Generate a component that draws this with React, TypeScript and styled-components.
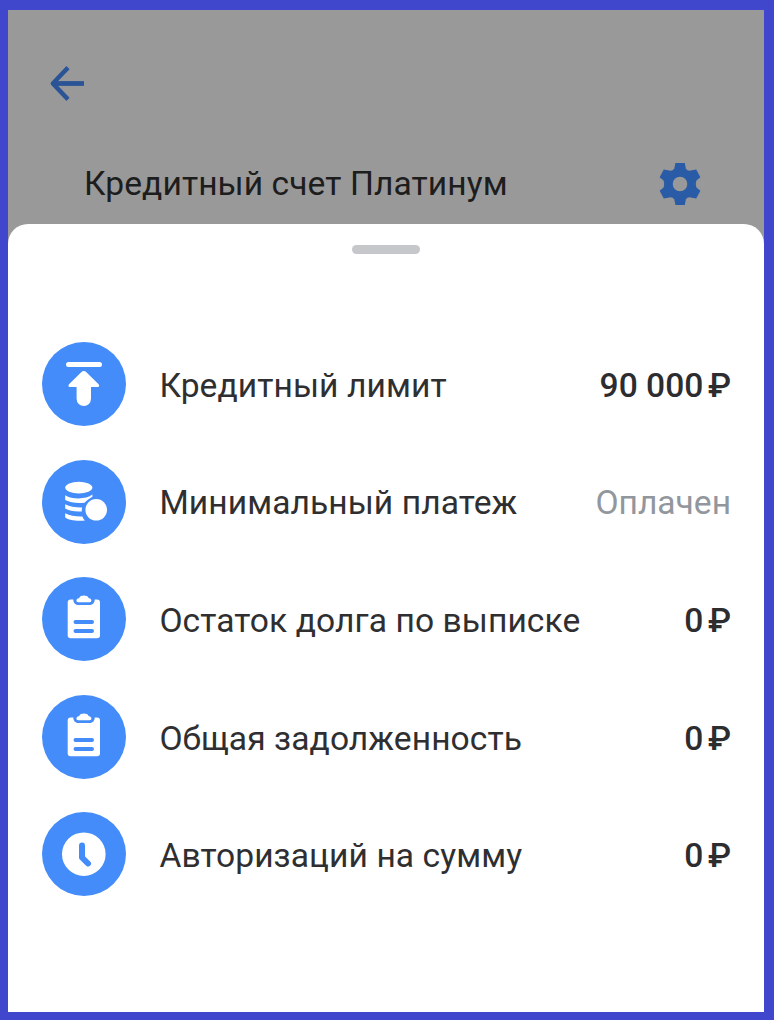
import React from 'react';
import styled, { createGlobalStyle } from 'styled-components';

const GlobalStyle = createGlobalStyle`
  *, *::before, *::after { box-sizing: border-box; }
  html, body { margin: 0; padding: 0; }
  body { font-family: Roboto, "Liberation Sans", sans-serif; }
  svg { display: block; flex: none; }
`;

const Screen = styled.main`
  width: 774px;
  height: 1020px;
  display: flex;
  flex-direction: column;
  overflow: hidden;
  background: #999999;
  border: solid #4047cc;
  border-width: 10px 10px 8px 8px;
`;

const Header = styled.header`
  flex: none;
  height: 214px;
  padding: 53px 59px 0 38px;
`;

const IconButton = styled.button`
  display: block;
  padding: 0;
  border: 0;
  background: none;
`;

const AccountLine = styled.div`
  display: flex;
  align-items: center;
  justify-content: space-between;
  padding-left: 38px;
  margin-top: 54px;
  height: 50px;
`;

const Title = styled.h1`
  margin: 0;
  font-size: 33.6px;
  line-height: 50px;
  font-weight: 400;
  letter-spacing: 0.08px;
  color: #1d1d1d;
  white-space: nowrap;
`;

const Sheet = styled.section`
  flex: 1;
  background: #ffffff;
  border-radius: 20px 20px 0 0;
  padding: 21px 33px 0 34px;
`;

const Handle = styled.div`
  width: 68px;
  height: 9px;
  margin: 0 0 0 310px;
  border-radius: 5px;
  background: #c5c7cb;
`;

const List = styled.ul`
  list-style: none;
  margin: 88px 0 0;
  padding: 0;
  display: flex;
  flex-direction: column;
  gap: 33.6px;
`;

const Row = styled.li`
  display: flex;
  align-items: center;
  height: 84px;
`;

const Label = styled.span`
  flex: 1;
  margin-left: 33.4px;
  padding-top: 3.8px;
  font-size: 33.6px;
  line-height: 40px;
  letter-spacing: 0.08px;
  color: #2f2f31;
  white-space: nowrap;
`;

const Value = styled.span<{ $muted?: boolean }>`
  padding-top: 3.8px;
  font-size: 33.6px;
  line-height: 40px;
  font-weight: ${(p) => (p.$muted ? 400 : 500)};
  letter-spacing: 0;
  color: ${(p) => (p.$muted ? '#92969d' : '#2d2d2f')};
  white-space: nowrap;
`;

const Currency = styled.span`
  margin-left: 4.6px;
`;

type IconKind = 'limit' | 'coins' | 'clipboard' | 'clock';

const glyphs: Record<IconKind, React.ReactNode> = {
  limit: (
    <>
      <rect x="24" y="20" width="36" height="5" rx="2.5" fill="#fff" />
      <path
        d="M39.2 30.2Q41.8 27.8 44.4 30.2L56.6 42.3Q58.2 45 55.6 45H49V56.8a7.2 7.2 0 0 1-14.4 0V45H28Q25.4 45 27 42.3Z"
        fill="#fff"
      />
    </>
  ),
  coins: (
    <>
      <ellipse cx="36.8" cy="27.6" rx="13.6" ry="5.8" fill="#fff" />
      <path
        d="M23.2 35.2C30 39.6 44 39.6 50.4 34.6V36.8C47 38.6 44.5 41 42.5 42.8C35 43.6 28 42.6 23.2 40Z"
        fill="#fff"
      />
      <path d="M23.2 44.2C28 46.6 34 47.6 40.3 47.4C39.8 48.8 39.7 50 39.8 51.4C33 51.8 27 51 23.2 48.6Z" fill="#fff" />
      <path d="M23.2 53.2C28 55.6 34 56.6 40.5 56.4C41 58 41.8 59.2 43 60.5C35 61.3 27 60.5 23.2 57.6Z" fill="#fff" />
      <circle cx="54.2" cy="49.8" r="10.8" fill="#fff" />
    </>
  ),
  clipboard: (
    <>
      <path
        d="M28.7 22.5H31.3C31.3 25.6 33.2 28 36.2 28H47.8C50.8 28 52.7 25.6 52.7 22.5H55Q58 22.5 58 25.5V58.5Q58 61.3 55 61.3H28.7Q25.7 61.3 25.7 58.5V25.5Q25.7 22.5 28.7 22.5Z"
        fill="#fff"
      />
      <path
        d="M34.4 22.9Q34.8 21.2 37.2 20.9C38.4 17.8 45.4 17.8 46.6 20.9Q49 21.2 49.4 22.9Q49.6 25.2 47.6 25.2H36.2Q34.2 25.2 34.4 22.9Z"
        fill="#fff"
      />
      <path d="M33.5 45H50M33.5 54H50" stroke="#438cf9" strokeWidth="4" strokeLinecap="round" />
    </>
  ),
  clock: (
    <>
      <circle cx="41.8" cy="42.2" r="21.8" fill="#fff" />
      <path
        d="M40 33.5V45.5L46 51.5"
        stroke="#438cf9"
        strokeWidth="6"
        strokeLinecap="round"
        strokeLinejoin="round"
        fill="none"
      />
    </>
  ),
};

const RowIcon = ({ kind }: { kind: IconKind }) => (
  <svg width="84" height="84" viewBox="0 0 84 84" aria-hidden="true">
    <circle cx="42" cy="42" r="42" fill="#438cf9" />
    {glyphs[kind]}
  </svg>
);

const BackArrow = () => (
  <svg width="42" height="42" viewBox="0 0 42 42" fill="none" stroke="#2b5496" strokeWidth="4.8">
    <path d="M38 20.5H7.5" />
    <path d="M20.5 6.2L6.8 20.5L20.5 34.8" strokeWidth="4.4" strokeLinecap="square" strokeLinejoin="round" />
  </svg>
);

const Gear = () => (
  <svg width="50" height="50" viewBox="0 0 50 50" fill="#2a5ba6">
    <path
      fillRule="evenodd"
      d="M20.4 4H29.8L30.9 9.8Q33 12.6 35.6 11.6L41.2 10.6L45.4 18.2L41.4 21.6Q40.2 25 41.4 28.4L45.4 31.8L41.2 39.4L35.6 38.4Q33 37.4 30.9 40.2L29.8 46H20.4L19.3 40.2Q17 37.4 14.4 38.4L8.8 39.4L4.6 31.8L8.6 28.4Q9.8 25 8.6 21.6L4.6 18.2L8.8 10.6L14.4 11.6Q17 12.6 19.3 9.8ZM25 17.7A7.3 7.3 0 1 0 25 32.3A7.3 7.3 0 1 0 25 17.7Z"
    />
  </svg>
);

const rows: { icon: IconKind; label: string; amount?: string; status?: string }[] = [
  { icon: 'limit', label: 'Кредитный лимит', amount: '90 000' },
  { icon: 'coins', label: 'Минимальный платеж', status: 'Оплачен' },
  { icon: 'clipboard', label: 'Остаток долга по выписке', amount: '0' },
  { icon: 'clipboard', label: 'Общая задолженность', amount: '0' },
  { icon: 'clock', label: 'Авторизаций на сумму', amount: '0' },
];

export default function App() {
  return (
    <>
      <GlobalStyle />
      <Screen>
        <Header>
          <IconButton aria-label="Назад">
            <BackArrow />
          </IconButton>
          <AccountLine>
            <Title>Кредитный счет Платинум</Title>
            <IconButton aria-label="Настройки">
              <Gear />
            </IconButton>
          </AccountLine>
        </Header>
        <Sheet>
          <Handle />
          <List>
            {rows.map((row) => (
              <Row key={row.label}>
                <RowIcon kind={row.icon} />
                <Label>{row.label}</Label>
                {row.amount ? (
                  <Value>
                    {row.amount}
                    <Currency>₽</Currency>
                  </Value>
                ) : (
                  <Value $muted>{row.status}</Value>
                )}
              </Row>
            ))}
          </List>
        </Sheet>
      </Screen>
    </>
  );
}
